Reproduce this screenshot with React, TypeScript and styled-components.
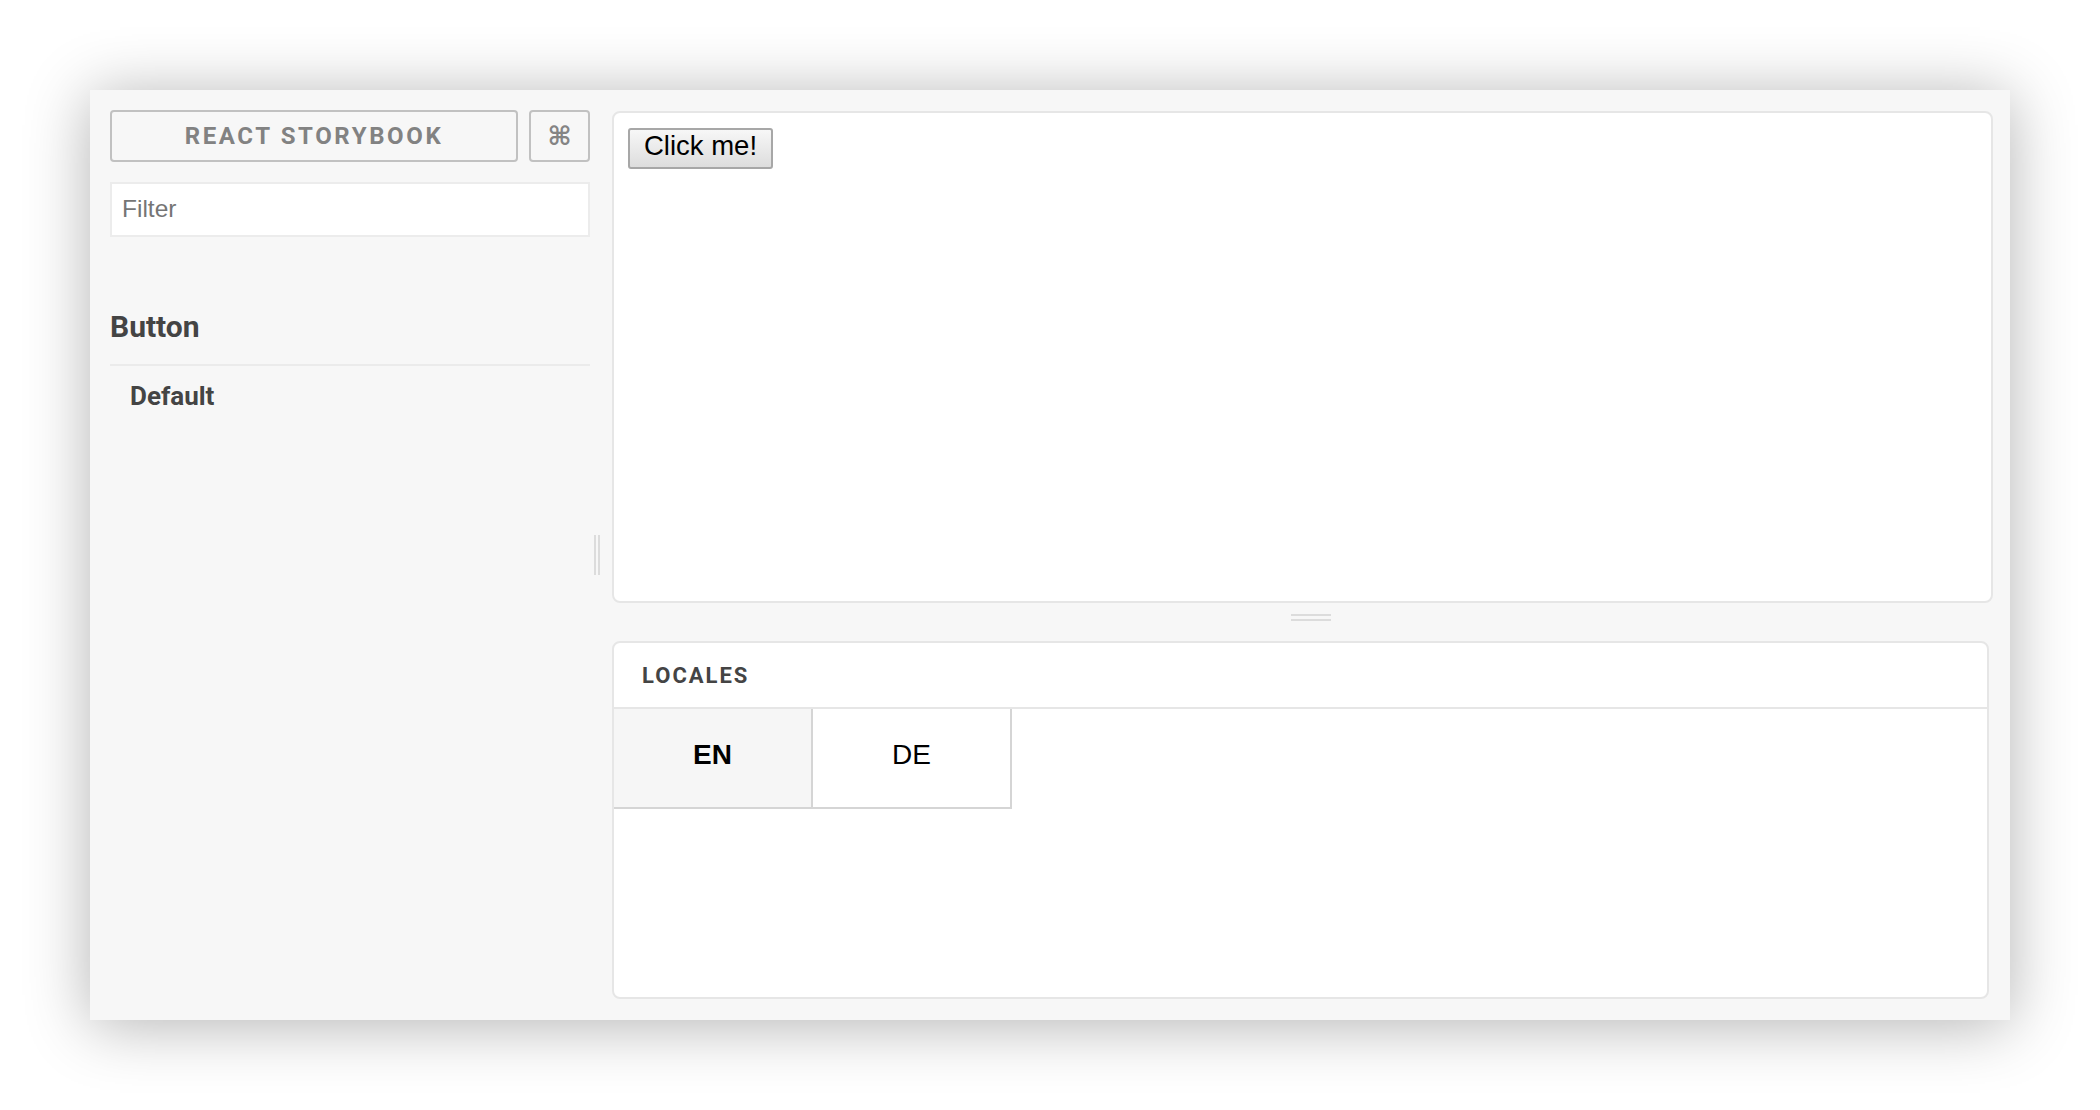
import React from 'react';
import styled, { createGlobalStyle } from 'styled-components';

const GlobalStyle = createGlobalStyle`
  html, body {
    margin: 0;
    padding: 0;
    background: #ffffff;
  }
  body {
    font-family: Roboto, 'Liberation Sans', sans-serif;
  }
  * {
    box-sizing: border-box;
  }
`;

const stories = [{ kind: 'Button', items: ['Default'] }];
const locales = [
  { code: 'EN', active: true },
  { code: 'DE', active: false },
];

const App = () => (
  <>
    <GlobalStyle />
    <Page>
      <Window>
        <Sidebar>
          <HeaderRow>
            <BrandButton>REACT STORYBOOK</BrandButton>
            <ShortcutButton>⌘</ShortcutButton>
          </HeaderRow>
          <FilterInput placeholder='Filter' />
          {stories.map(s => (
            <StoryGroup key={s.kind}>
              <KindTitle>{s.kind}</KindTitle>
              {s.items.map(name => (
                <StoryLink key={name}>{name}</StoryLink>
              ))}
            </StoryGroup>
          ))}
        </Sidebar>

        <VResizer>
          <VGrip />
        </VResizer>

        <Main>
          <Preview>
            <DemoButton>Click me!</DemoButton>
          </Preview>
          <HResizer>
            <HGrip />
          </HResizer>
          <AddonPanel>
            <AddonHeader>
              <AddonTab>LOCALES</AddonTab>
            </AddonHeader>
            <LocaleRow>
              {locales.map(l => (
                <LocaleButton key={l.code} active={l.active}>
                  {l.code}
                </LocaleButton>
              ))}
            </LocaleRow>
          </AddonPanel>
        </Main>
      </Window>
    </Page>
  </>
);

export default App;

const Page = styled.div`
  width: 2100px;
  height: 1110px;
  padding: 90px;
`;

const Window = styled.div`
  width: 1920px;
  height: 930px;
  display: flex;
  background: #f7f7f7;
  box-shadow: 0 5px 60px rgba(0, 0, 0, 0.3);
`;

//  SIDEBAR
const Sidebar = styled.div`
  width: 500px;
  padding: 20px 0 0 20px;
  display: flex;
  flex-direction: column;
`;

const HeaderRow = styled.div`
  height: 52px;
  display: flex;
  gap: 11px;
`;

const BrandButton = styled.div`
  flex: 1;
  display: flex;
  align-items: center;
  justify-content: center;
  border: 2px solid #c1c1c1;
  border-radius: 4px;
  color: #828282;
  font-family: Roboto, sans-serif;
  font-size: 24px;
  font-weight: 700;
  letter-spacing: 2.6px;
`;

const ShortcutButton = styled.div`
  width: 61px;
  display: flex;
  align-items: center;
  justify-content: center;
  border: 2px solid #c1c1c1;
  border-radius: 4px;
  color: #848484;
  font-family: 'DejaVu Sans', sans-serif;
  font-size: 26px;
  font-weight: 700;
`;

const FilterInput = styled.input`
  height: 55px;
  margin-top: 20px;
  padding: 0 10px 2px;
  border: 2px solid #ececec;
  background: #ffffff;
  font-family: 'Liberation Sans', Arial, sans-serif;
  font-size: 24.5px;
  color: #333;
  outline: none;
  ::placeholder {
    color: #757575;
  }
`;

const StoryGroup = styled.div`
  margin-top: 72px;
`;

const KindTitle = styled.div`
  padding-bottom: 19px;
  border-bottom: 2px solid #ebebeb;
  color: #444;
  font-family: Roboto, sans-serif;
  font-size: 30px;
  font-weight: 700;
  line-height: 36px;
`;

const StoryLink = styled.div`
  margin-top: 14px;
  padding-left: 20px;
  color: #444;
  font-family: Roboto, sans-serif;
  font-size: 26px;
  font-weight: 700;
  line-height: 32px;
`;

//  RESIZERS
const VResizer = styled.div`
  width: 22px;
  padding-left: 4px;
  display: flex;
  align-items: center;
`;

const VGrip = styled.div`
  width: 6px;
  height: 40px;
  border-left: 2px solid #dcdcdc;
  border-right: 2px solid #dcdcdc;
`;

const HResizer = styled.div`
  height: 38px;
  padding: 11px 0 0 16px;
  display: flex;
  justify-content: center;
`;

const HGrip = styled.div`
  width: 40px;
  height: 7px;
  border-top: 2px solid #dcdcdc;
  border-bottom: 2px solid #dcdcdc;
`;

//  MAIN AREA
const Main = styled.div`
  flex: 1;
  padding: 21px 17px 21px 0;
  display: flex;
  flex-direction: column;
`;

const Preview = styled.div`
  height: 492px;
  padding: 15px 14px;
  background: #ffffff;
  border: 2px solid #e6e6e6;
  border-radius: 8px;
`;

const DemoButton = styled.button`
  width: 145px;
  height: 41px;
  padding: 0 0 5px;
  background: linear-gradient(#f7f7f7, #dddddd);
  border: 2px solid #a7a7a7;
  border-radius: 3px;
  color: #000;
  font-family: 'Liberation Sans', Arial, sans-serif;
  font-size: 27.5px;
  line-height: 1;
`;

const AddonPanel = styled.div`
  flex: 1;
  margin-right: 4px;
  display: flex;
  flex-direction: column;
  background: #ffffff;
  border: 2px solid #e6e6e6;
  border-radius: 8px;
  overflow: hidden;
`;

const AddonHeader = styled.div`
  height: 66px;
  padding-left: 28px;
  display: flex;
  align-items: center;
  border-bottom: 2px solid #e6e6e6;
`;

const AddonTab = styled.div`
  color: #444;
  font-family: Roboto, sans-serif;
  font-size: 22px;
  font-weight: 700;
  letter-spacing: 2px;
`;

const LocaleRow = styled.div`
  display: flex;
`;

const LocaleButton = styled.div<{ active: boolean }>`
  width: 199px;
  height: 100px;
  padding-bottom: 6px;
  display: flex;
  align-items: center;
  justify-content: center;
  background: ${p => (p.active ? '#f6f6f6' : '#ffffff')};
  border-right: 2px solid #d5d5d5;
  border-bottom: 2px solid #d5d5d5;
  color: #000;
  font-family: 'Liberation Sans', Arial, sans-serif;
  font-size: 28px;
  font-weight: ${p => (p.active ? 700 : 400)};
`;
